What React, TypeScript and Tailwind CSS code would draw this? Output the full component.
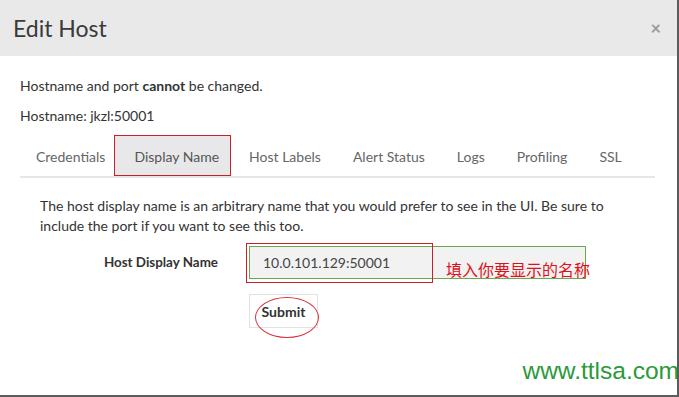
import React from "react";

const tabs = [
  "Credentials",
  "Display Name",
  "Host Labels",
  "Alert Status",
  "Logs",
  "Profiling",
  "SSL",
];

export default function App() {
  return (
    <div className="relative h-[397px] w-[679px] overflow-hidden bg-white font-['Lato',sans-serif] text-[#333]">
      <div className="flex h-[397px] w-[679px] flex-col border-b-2 border-r-2 border-[#5c5c5c]">
        <div className="flex h-[56px] items-center justify-between bg-[#e9e9ea] pl-[13px] pr-[16px]">
          <h2 className="text-[23px] font-normal text-[#3a3a3a]">Edit Host</h2>
          <span className="text-[18px] font-bold leading-none text-[#9a9a9a]">×</span>
        </div>

        <div className="px-5 pt-[20px] text-[14px]">
          <p className="leading-5">
            Hostname and port <strong className="font-bold">cannot</strong> be changed.
          </p>
          <p className="mt-[10px] leading-5">Hostname: jkzl:50001</p>

          <div className="mr-[2px] mt-[9px] flex h-[43px] border-b-2 border-[#e6e6e6] text-[14px]">
            {tabs.map((tab) =>
              tab === "Display Name" ? (
                <div
                  key={tab}
                  className="ml-[-7px] mr-[2px] flex items-center border border-[#c8202a] bg-[#e8e8ea] pl-[19px] pr-[11px] pt-[1px] text-[#555]"
                >
                  {tab}
                </div>
              ) : (
                <div key={tab} className="flex items-center px-4 pt-[1px] text-[#666]">
                  {tab}
                </div>
              )
            )}
          </div>

          <div className="px-5 pt-[18px]">
            <p className="leading-5">
              The host display name is an arbitrary name that you would prefer to see in the UI. Be sure to
              <br />
              include the port if you want to see this too.
            </p>

            <div className="mt-[10px] flex items-center">
              <label className="w-[178px] text-right text-[13.4px] font-bold">Host Display Name</label>
              <div className="relative ml-[31px]">
                <div className="flex h-[33px] w-[337px] items-center border border-[#6aa84f] bg-[#f2f2f2] pl-[13px] text-[#444]">
                  10.0.101.129:50001
                </div>
                <div className="absolute left-[-3px] top-[-3px] h-[40px] w-[187px] border border-[#c8202a]" />
                <span className="absolute left-[197px] top-[13px] whitespace-nowrap font-['Noto_Sans_CJK_SC',sans-serif] text-[16px] leading-5 text-[#e0101a]">
                  填入你要显示的名称
                </span>
              </div>
            </div>

            <div className="ml-[209px] mt-[15px]">
              <div className="relative inline-flex h-[34px] w-[69px] items-center justify-center border border-[#e2e2e2] font-bold text-[#333]">
                Submit
                <div className="absolute left-[5px] top-[2px] h-[41px] w-[64px] rounded-[50%] border border-[#d8303a]" />
              </div>
            </div>
          </div>
        </div>
      </div>

      <span className="absolute bottom-[12px] right-0 font-['Liberation_Sans',Arial,sans-serif] text-[24.5px] leading-7 text-[#2a9a3a]">
        www.ttlsa.com
      </span>
    </div>
  );
}
